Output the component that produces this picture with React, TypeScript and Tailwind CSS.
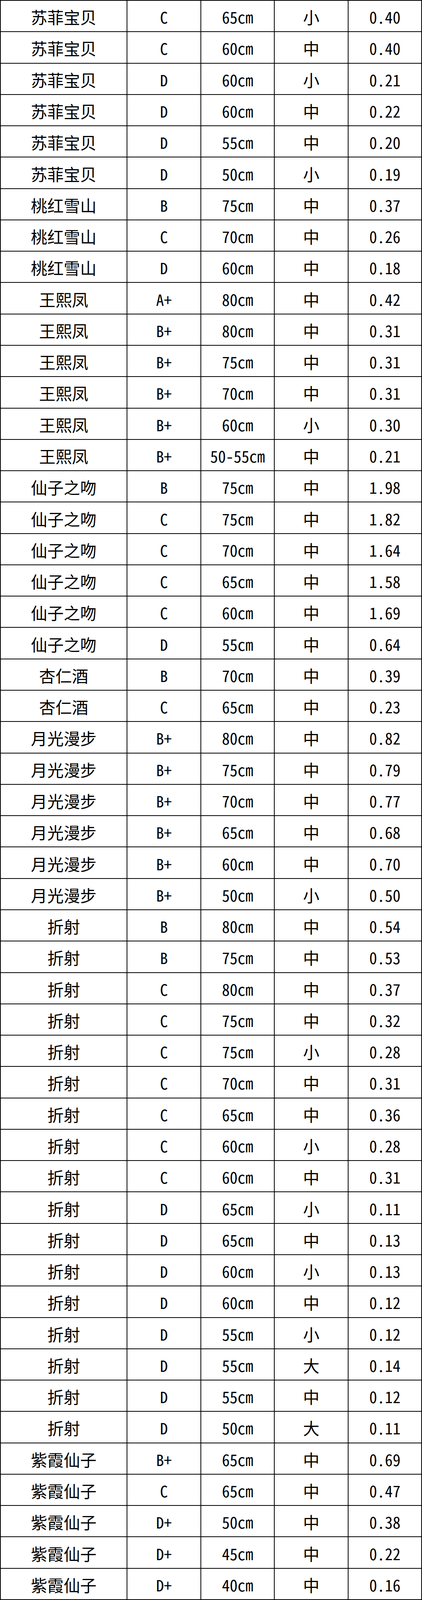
const rows: [string, string, string, string, string][] = [
  ['苏菲宝贝', 'C', '65cm', '小', '0.40'],
  ['苏菲宝贝', 'C', '60cm', '中', '0.40'],
  ['苏菲宝贝', 'D', '60cm', '小', '0.21'],
  ['苏菲宝贝', 'D', '60cm', '中', '0.22'],
  ['苏菲宝贝', 'D', '55cm', '中', '0.20'],
  ['苏菲宝贝', 'D', '50cm', '小', '0.19'],
  ['桃红雪山', 'B', '75cm', '中', '0.37'],
  ['桃红雪山', 'C', '70cm', '中', '0.26'],
  ['桃红雪山', 'D', '60cm', '中', '0.18'],
  ['王熙凤', 'A+', '80cm', '中', '0.42'],
  ['王熙凤', 'B+', '80cm', '中', '0.31'],
  ['王熙凤', 'B+', '75cm', '中', '0.31'],
  ['王熙凤', 'B+', '70cm', '中', '0.31'],
  ['王熙凤', 'B+', '60cm', '小', '0.30'],
  ['王熙凤', 'B+', '50-55cm', '中', '0.21'],
  ['仙子之吻', 'B', '75cm', '中', '1.98'],
  ['仙子之吻', 'C', '75cm', '中', '1.82'],
  ['仙子之吻', 'C', '70cm', '中', '1.64'],
  ['仙子之吻', 'C', '65cm', '中', '1.58'],
  ['仙子之吻', 'C', '60cm', '中', '1.69'],
  ['仙子之吻', 'D', '55cm', '中', '0.64'],
  ['杏仁酒', 'B', '70cm', '中', '0.39'],
  ['杏仁酒', 'C', '65cm', '中', '0.23'],
  ['月光漫步', 'B+', '80cm', '中', '0.82'],
  ['月光漫步', 'B+', '75cm', '中', '0.79'],
  ['月光漫步', 'B+', '70cm', '中', '0.77'],
  ['月光漫步', 'B+', '65cm', '中', '0.68'],
  ['月光漫步', 'B+', '60cm', '中', '0.70'],
  ['月光漫步', 'B+', '50cm', '小', '0.50'],
  ['折射', 'B', '80cm', '中', '0.54'],
  ['折射', 'B', '75cm', '中', '0.53'],
  ['折射', 'C', '80cm', '中', '0.37'],
  ['折射', 'C', '75cm', '中', '0.32'],
  ['折射', 'C', '75cm', '小', '0.28'],
  ['折射', 'C', '70cm', '中', '0.31'],
  ['折射', 'C', '65cm', '中', '0.36'],
  ['折射', 'C', '60cm', '小', '0.28'],
  ['折射', 'C', '60cm', '中', '0.31'],
  ['折射', 'D', '65cm', '小', '0.11'],
  ['折射', 'D', '65cm', '中', '0.13'],
  ['折射', 'D', '60cm', '小', '0.13'],
  ['折射', 'D', '60cm', '中', '0.12'],
  ['折射', 'D', '55cm', '小', '0.12'],
  ['折射', 'D', '55cm', '大', '0.14'],
  ['折射', 'D', '55cm', '中', '0.12'],
  ['折射', 'D', '50cm', '大', '0.11'],
  ['紫霞仙子', 'B+', '65cm', '中', '0.69'],
  ['紫霞仙子', 'C', '65cm', '中', '0.47'],
  ['紫霞仙子', 'D+', '50cm', '中', '0.38'],
  ['紫霞仙子', 'D+', '45cm', '中', '0.22'],
  ['紫霞仙子', 'D+', '40cm', '中', '0.16'],
];

// columns 1 and 4 hold Chinese text, slightly larger than the half-width latin cells
const cjkCol = [true, false, false, true, false];

export default function App() {
  return (
    <div className="h-screen w-full overflow-hidden bg-white">
      <div className="grid h-full w-full grid-cols-[322fr_187fr_186fr_187fr_186fr] grid-rows-[repeat(51,minmax(0,1fr))] gap-[2px] bg-black p-[2px] font-['Noto_Sans_CJK_SC','Noto_Sans',sans-serif] leading-none text-black [font-feature-settings:'hwid']">
        {rows.map((row, i) =>
          row.map((cell, j) => (
            <div
              key={`${i}-${j}`}
              className={`flex items-center justify-center overflow-hidden bg-white pt-[4px] ${cjkCol[j] ? 'text-[42px]' : 'text-[40px]'}`}
            >
              {cell}
            </div>
          )),
        )}
      </div>
    </div>
  );
}
